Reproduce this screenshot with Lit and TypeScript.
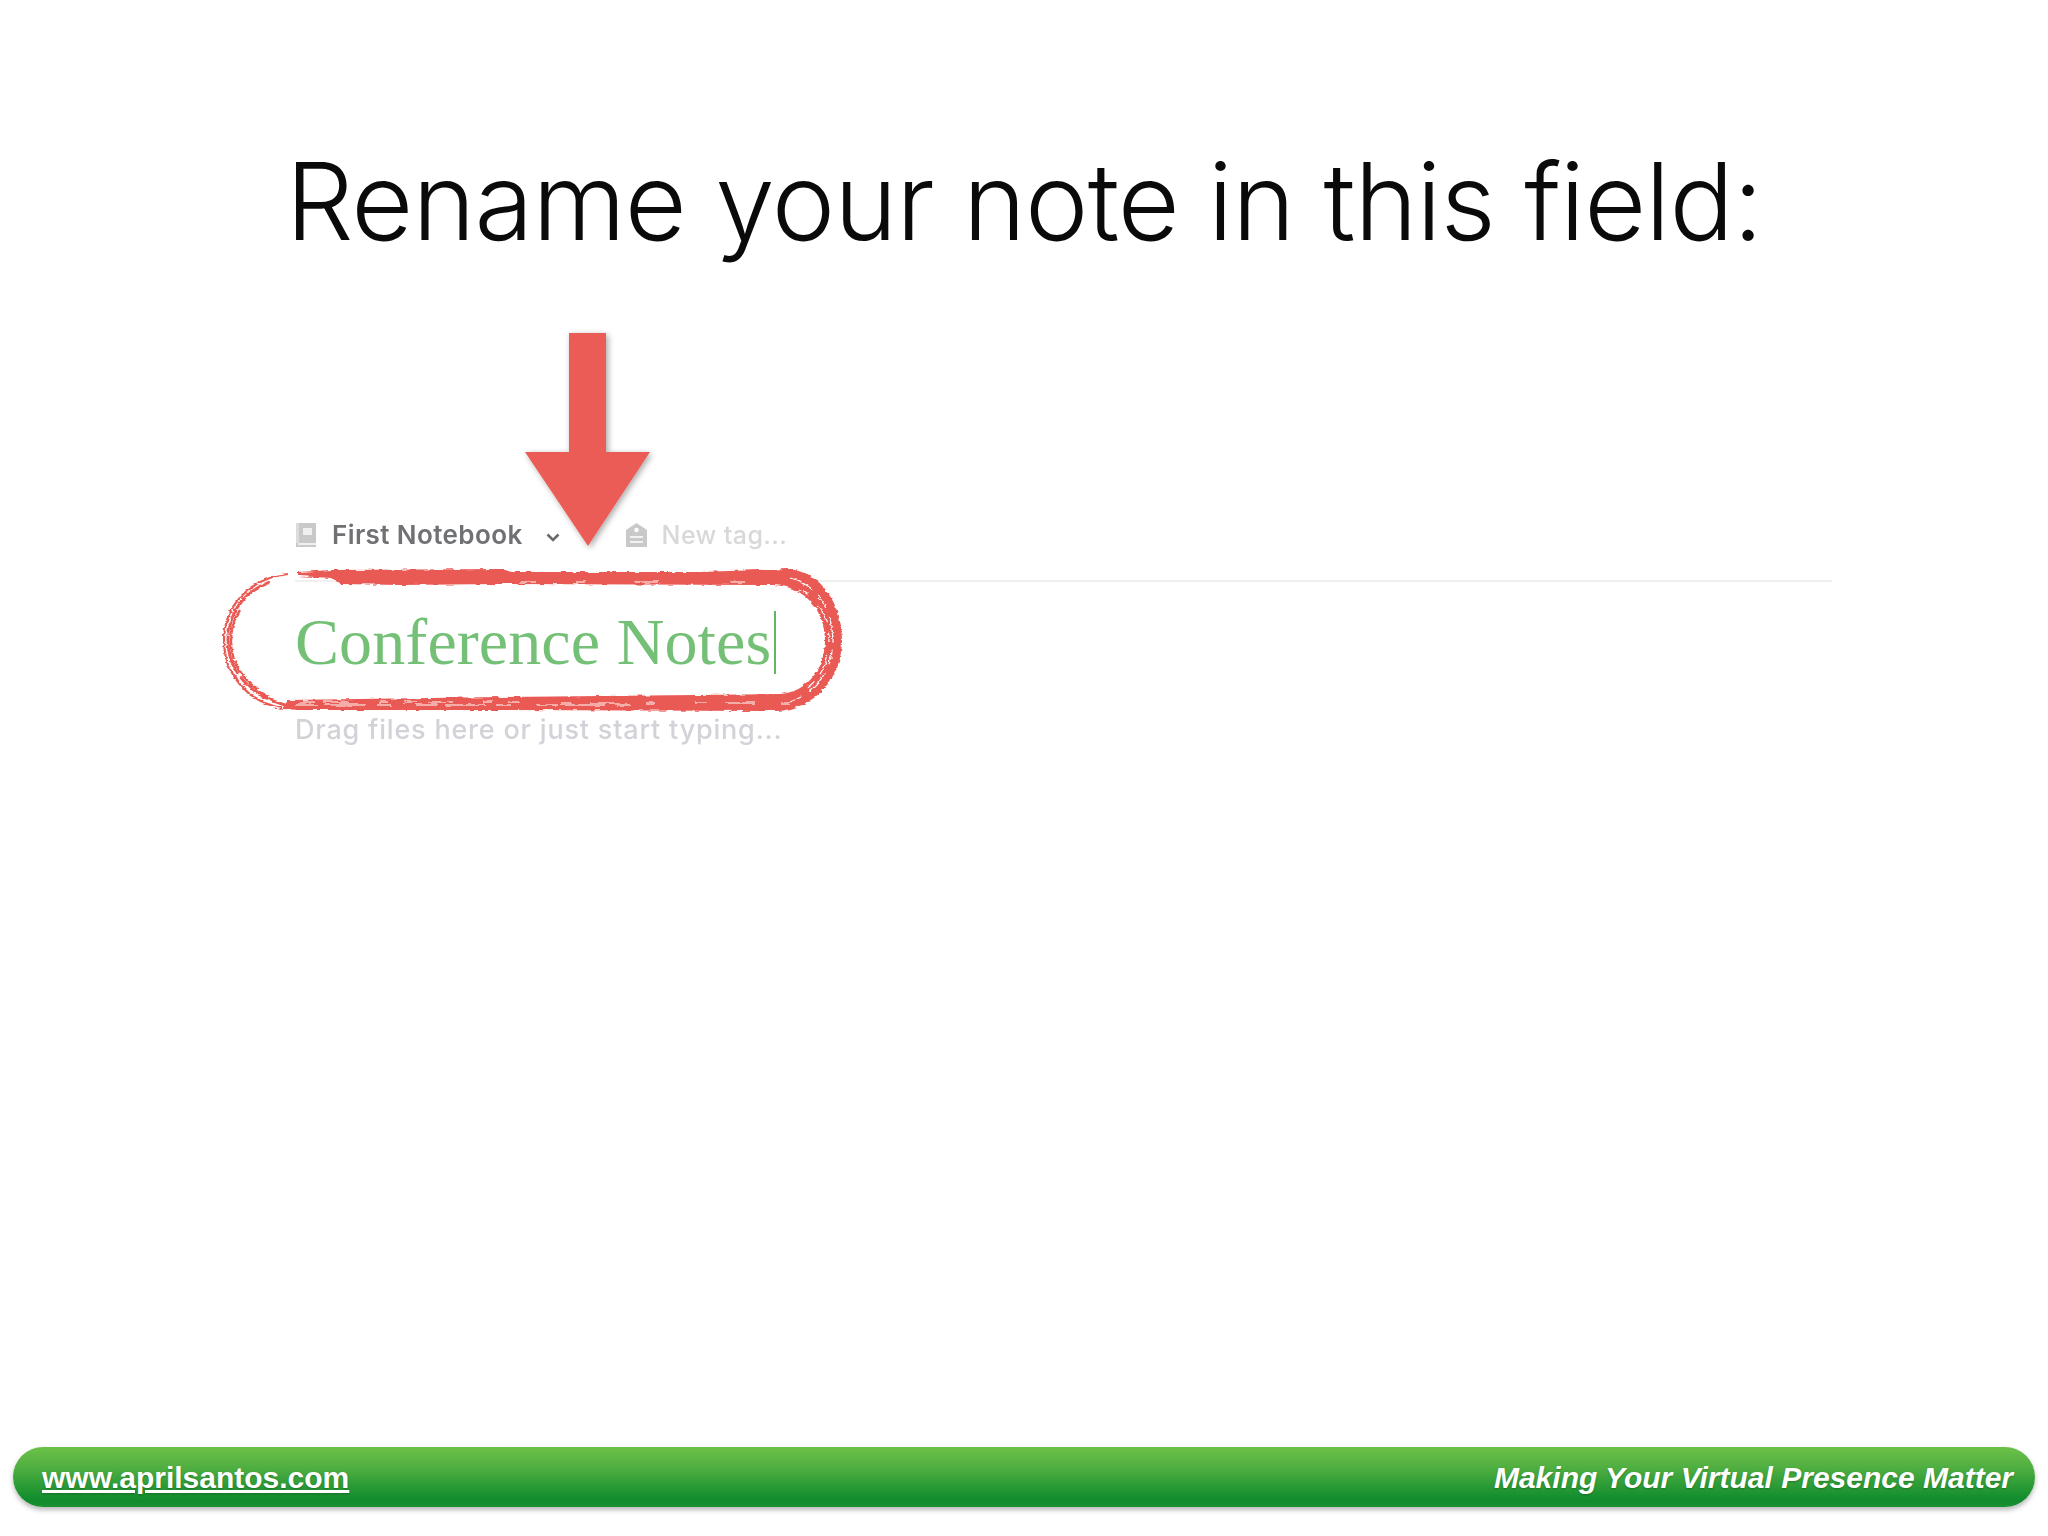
import { LitElement, html, css } from "lit";
import { customElement } from "lit/decorators.js";

@customElement("app-root")
export class AppRoot extends LitElement {
  static styles = css`
    :host {
      display: flex;
      flex-direction: column;
      position: relative;
      width: 2048px;
      height: 1536px;
      background: #fff;
      overflow: hidden;
      font-family: "Liberation Sans", sans-serif;
    }
    h1 {
      margin: 0;
      padding-top: 136px;
      height: 184px;
      box-sizing: content-box;
      text-align: center;
      font: 300 107px/130px Inter, sans-serif;
      letter-spacing: -0.9px;
      color: #0a0a0a;
    }
    .editor {
      display: flex;
      flex-direction: column;
      margin: 195px 216px 0 295px;
      filter: blur(0.6px);
    }
    .meta {
      display: flex;
      align-items: center;
      height: 40px;
      padding-bottom: 25px;
      border-bottom: 2px solid #f0f0f0;
      font: 600 26px/40px Inter, sans-serif;
      letter-spacing: 0.4px;
    }
    .nb { color: #707174; margin-left: 15px; }
    .chev { margin-left: 23px; margin-right: 66px; margin-top: 4px; }
    .tag { color: #d8d8d8; font-weight: 500; font-size: 25px; margin-left: 15px; }
    .title {
      display: flex;
      align-items: center;
      height: 92px;
      margin-top: 14px;
      font: 400 66px/92px "Liberation Serif", serif;
      letter-spacing: 0.1px;
      color: #74c077;
    }
    .caret { width: 2px; height: 63px; background: #63b668; margin-left: 3px; }
    .hint {
      font: 500 27px/40px Inter, sans-serif;
      letter-spacing: 0.8px;
      color: #d2d2d8;
      margin-top: 22px;
    }
    .overlay { position: absolute; left: 0; top: 0; pointer-events: none; }
    .bar {
      margin: auto 13px 29px 13px;
      height: 60px;
      border-radius: 30px;
      display: flex;
      align-items: center;
      justify-content: space-between;
      padding: 2px 22px 0 29px;
      box-sizing: border-box;
      background: linear-gradient(#6cc147 0%, #4fae41 35%, #16902f 82%, #128a2d 90%, #1b9333 100%);
      box-shadow: 0 3px 5px rgba(0, 0, 0, 0.28);
      color: #fff;
      font-size: 30px;
      font-weight: 700;
      text-shadow: 0 1px 2px rgba(0, 0, 0, 0.25);
    }
    .bar a { color: #fff; text-decoration: underline; }
  `;

  render() {
    return html`
      <h1>Rename your note in this field:</h1>
      <div class="editor">
        <div class="meta">
          <svg width="22" height="24" viewBox="0 0 22 24">
            <path fill="#c9c9c9" d="M1 0h20v24H1z" />
            <path fill="#f0f0f0" d="M8 5h9v7H8zM3 20h18v2H3z" />
            <path fill="#dcdcdc" d="M1 0h3v20H1z" />
          </svg>
          <span class="nb">First Notebook</span>
          <svg class="chev" width="14" height="9" viewBox="0 0 14 9">
            <path fill="none" stroke="#6a6a6a" stroke-width="2.6" d="M1.5 1.5 7 7l5.5-5.5" />
          </svg>
          <svg width="21" height="24" viewBox="0 0 21 24">
            <path fill="#c9c9c9" d="M0 7 10.5 0 21 7v17H0z" />
            <circle cx="10.5" cy="7" r="2.2" fill="#fff" />
            <path fill="#f2f2f2" d="M4 13h13v2H4zM4 18h13v2H4z" />
          </svg>
          <span class="tag">New tag...</span>
        </div>
        <div class="title">Conference Notes<span class="caret"></span></div>
        <div class="hint">Drag files here or just start typing...</div>
      </div>

      <svg class="overlay" width="2048" height="1536" viewBox="0 0 2048 1536">
        <defs>
          <filter id="s" x="-20%" y="-20%" width="140%" height="140%">
            <feDropShadow dx="2" dy="2" stdDeviation="3" flood-color="#000" flood-opacity="0.35" />
          </filter>
          <filter id="rough" x="-5%" y="-10%" width="110%" height="120%">
            <feTurbulence type="fractalNoise" baseFrequency="0.09 0.35" numOctaves="2" seed="4" />
            <feDisplacementMap in="SourceGraphic" scale="4" xChannelSelector="R" yChannelSelector="G" />
          </filter>
        </defs>
        <path fill="#ec5c56" filter="url(#s)" d="M569 333h37v119h44l-62 94-63-94h44z" />
        <g filter="url(#rough)">
          <path
            fill="#ea5a55"
            d="M298 572L332 570L500 569L512 572L700 572L787 569C822 571 842 605 842 640C842 678 815 709 777 711L500 710L300 710L282 709L288 700L500 697L780 694C808 692 825 668 825 640C825 612 806 586 773 585L500 584L400 585L340 584L332 578L298 576Z"
          />
          <g fill="none" stroke="#ea5a55">
            <path stroke-width="2.2" d="M288 574C250 578 224 606 224 640C224 672 246 702 282 708" />
            <path stroke-width="3" stroke-dasharray="70 2 40 3" d="M270 582C244 592 229 612 228 640C228 668 246 694 285 705" />
            <path stroke-width="2.4" stroke-dasharray="50 3" d="M240 610C232 622 231 632 231 642C231 664 245 684 270 698" />
          </g>
          <g fill="none" stroke="#fff" stroke-width="1.2">
            <path stroke-dasharray="22 7 40 12 14 25" d="M296 705H640" />
            <path stroke-dasharray="14 9 26 30 9 16" d="M300 702H520" />
            <path stroke-dasharray="12 18 30 26 9 40" d="M560 703H800" />
            <path stroke-dasharray="16 40 9 50 24 70" d="M520 582H780" />
            <path stroke-dasharray="26 8 14 10" d="M790 578C818 585 832 610 833 640C833 668 818 692 790 702" />
            <path stroke-dasharray="10 14 20 9" d="M800 590C822 600 829 622 829 642C829 662 820 682 800 692" />
          </g>
        </g>
      </svg>

      <div class="bar">
        <a>www.aprilsantos.com</a>
        <em>Making Your Virtual Presence Matter</em>
      </div>
    `;
  }
}
